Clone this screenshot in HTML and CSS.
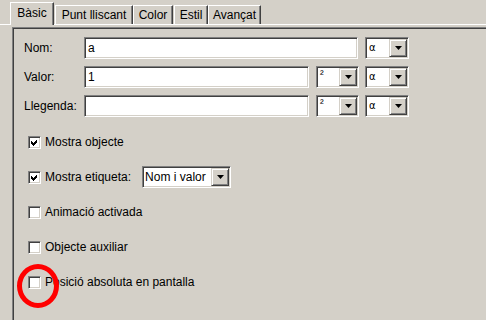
FILE: index.html
```html
<!DOCTYPE html>
<html>
<head>
<meta charset="utf-8">
<link rel="stylesheet" href="styles.css">
</head>
<body>
<div class="tabs">
  <div class="tab active t1">Bàsic</div>
  <div class="tab t2">Punt lliscant</div>
  <div class="tab t3">Color</div>
  <div class="tab t4">Estil</div>
  <div class="tab t5">Avançat</div>
</div>
<div class="pane">
  <div class="panel">
    <div class="fields">
      <div class="row">
        <span class="label">Nom:</span>
        <div class="field long">a</div>
        <div class="combo alpha"><span class="val greek">α</span><span class="btn"><svg width="7" height="4" viewBox="0 0 7 4"><polygon points="0,0 7,0 3.5,4" fill="#000"/></svg></span></div>
      </div>
      <div class="row">
        <span class="label">Valor:</span>
        <div class="field short">1</div>
        <div class="combo sup"><span class="val supval">²</span><span class="btn"><svg width="7" height="4" viewBox="0 0 7 4"><polygon points="0,0 7,0 3.5,4" fill="#000"/></svg></span></div>
        <div class="combo alpha after"><span class="val greek">α</span><span class="btn"><svg width="7" height="4" viewBox="0 0 7 4"><polygon points="0,0 7,0 3.5,4" fill="#000"/></svg></span></div>
      </div>
      <div class="row">
        <span class="label">Llegenda:</span>
        <div class="field short"></div>
        <div class="combo sup"><span class="val supval">²</span><span class="btn"><svg width="7" height="4" viewBox="0 0 7 4"><polygon points="0,0 7,0 3.5,4" fill="#000"/></svg></span></div>
        <div class="combo alpha after"><span class="val greek">α</span><span class="btn"><svg width="7" height="4" viewBox="0 0 7 4"><polygon points="0,0 7,0 3.5,4" fill="#000"/></svg></span></div>
      </div>
    </div>
    <div class="checks">
      <div class="check-row">
        <span class="box"><svg width="11" height="11" viewBox="0 0 11 11"><path d="M2 4 L4 6 L8 2 L8 5 L4 9 L2 7 Z" fill="#000" shape-rendering="crispEdges"/></svg></span>
        <span>Mostra objecte</span>
      </div>
      <div class="check-row">
        <span class="box"><svg width="11" height="11" viewBox="0 0 11 11"><path d="M2 4 L4 6 L8 2 L8 5 L4 9 L2 7 Z" fill="#000" shape-rendering="crispEdges"/></svg></span>
        <span>Mostra etiqueta:</span>
        <div class="combo label-combo"><span class="val">Nom i valor</span><span class="btn"><svg width="7" height="4" viewBox="0 0 7 4"><polygon points="0,0 7,0 3.5,4" fill="#000"/></svg></span></div>
      </div>
      <div class="check-row">
        <span class="box"></span>
        <span>Animació activada</span>
      </div>
      <div class="check-row">
        <span class="box"></span>
        <span>Objecte auxiliar</span>
      </div>
      <div class="check-row">
        <span class="box"></span>
        <span>Posició absoluta en pantalla</span>
      </div>
    </div>
  </div>
</div>
<div class="highlight"></div>
</body>
</html>
```
FILE: styles.css
```css
html, body {
  margin: 0;
  padding: 0;
}
body {
  width: 486px;
  height: 320px;
  overflow: hidden;
  background: #d4d0c8;
  font-family: "Liberation Sans", Arial, sans-serif;
  font-size: 12px;
  color: #000;
  position: relative;
}
.tabs {
  display: flex;
  align-items: flex-end;
  height: 24px;
  padding-left: 10px;
  position: relative;
  z-index: 2;
}
.tab {
  box-sizing: border-box;
  height: 19px;
  border-top: 1px solid #fff;
  border-left: 1px solid #fff;
  border-right: 1px solid #404040;
  box-shadow: inset -1px 0 #808080;
  text-align: center;
  line-height: 18px;
  background: #d4d0c8;
  white-space: nowrap;
}
.tab.active {
  height: 23px;
  margin-bottom: -1px;
  padding-top: 1px;
  line-height: 18px;
}
.t1 { width: 44px; }
.t2 { width: 78px; margin-left: 1px; }
.t3 { width: 40px; }
.t4 { width: 34px; margin-left: 1px; }
.t5 { width: 53px; }

.pane {
  border-top: 1px solid #fff;
}
.panel {
  margin-left: 12px;
  margin-top: 2px;
  height: 400px;
  border-top: 1px solid #808080;
  border-left: 1px solid #808080;
  box-shadow: inset 1px 1px #404040;
  padding: 9px 0 0 11px;
}
.fields {
  display: flex;
  flex-direction: column;
  gap: 7px;
}
.row {
  display: flex;
  align-items: center;
  height: 22px;
}
.label {
  width: 60px;
}
.field {
  box-sizing: border-box;
  height: 22px;
  background: #fff;
  border: 1px solid;
  border-color: #808080 #fff #fff #808080;
  box-shadow: inset 1px 1px #404040, inset -1px -1px #d4d0c8;
  padding-left: 3px;
  line-height: 20px;
}
.field.long { width: 274px; }
.field.short { width: 225px; }

.combo {
  box-sizing: border-box;
  display: flex;
  height: 22px;
  background: #fff;
  border: 1px solid;
  border-color: #808080 #fff #fff #808080;
  box-shadow: inset 1px 1px #404040, inset -1px -1px #d4d0c8;
  padding: 1px;
}
.combo .val {
  flex: 1;
  padding-left: 2px;
  line-height: 18px;
  overflow: hidden;
  white-space: nowrap;
}
.combo .btn {
  box-sizing: border-box;
  width: 18px;
  height: 18px;
  flex: none;
  background: #d4d0c8;
  border: 1px solid;
  border-color: #d4d0c8 #404040 #404040 #d4d0c8;
  box-shadow: inset 1px 1px #fff, inset -1px -1px #808080;
  display: flex;
  align-items: center;
  justify-content: center;
}
.combo .btn svg { display: block; }
.alpha { width: 44px; margin-left: 7px; }
.alpha.after { margin-left: 6px; }
.sup { width: 43px; margin-left: 7px; }
.greek {
  font-family: "DejaVu Sans", sans-serif;
  font-size: 10px;
}
.supval {
  font-size: 11px;
  line-height: 13px !important;
}
.label-combo {
  width: 89px;
  margin-left: 7px;
}
.label-combo .val { padding-left: 1px; }

.checks {
  margin-top: 14px;
  padding-left: 4px;
  display: flex;
  flex-direction: column;
  gap: 13px;
}
.check-row {
  display: flex;
  align-items: center;
  height: 22px;
  gap: 4px;
}
.box {
  box-sizing: border-box;
  width: 13px;
  height: 13px;
  flex: none;
  background: #fff;
  border: 1px solid;
  border-color: #808080 #fff #fff #808080;
  box-shadow: inset 1px 1px #404040, inset -1px -1px #d4d0c8;
  position: relative;
}
.box svg {
  display: block;
  position: absolute;
  left: 0;
  top: 0;
}
.highlight {
  position: absolute;
  left: 17px;
  top: 264px;
  width: 42px;
  height: 44px;
  box-sizing: border-box;
  border: 5px solid #f00;
  border-radius: 50%;
}
```
